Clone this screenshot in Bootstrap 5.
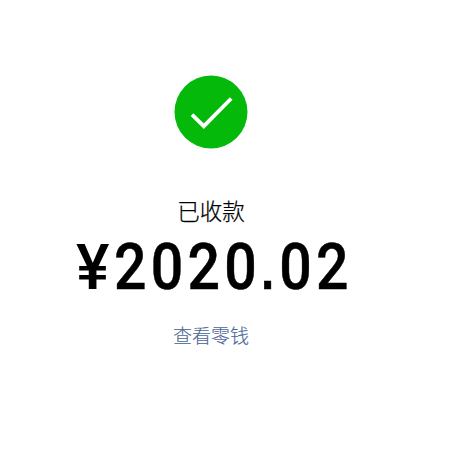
<!DOCTYPE html>
<html lang="zh-CN">
<head>
<meta charset="utf-8">
<meta name="viewport" content="width=device-width, initial-scale=1">
<title>已收款</title>
<link href="https://cdn.jsdelivr.net/npm/bootstrap@5.3.0/dist/css/bootstrap.min.css" rel="stylesheet">
<style>
body { font-family: "Noto Sans CJK SC", sans-serif; color: #000; }
.receipt { width: 422px; padding-top: 75px; }
.status-icon { width: 74px; height: 74px; }
.status-text { margin-top: 44px; font-size: 22.5px; line-height: 34px; font-weight: 300; -webkit-text-stroke: .25px; }
.amount { width: 270px; height: 70px; margin-top: 5px; font-family: Roboto, sans-serif; font-weight: 500; font-size: 65px; line-height: 70px; }
.currency { width: 37.5px; font-size: 63px; line-height: 71px; }
.digits { letter-spacing: 4.8px; transform: scaleX(.88); transform-origin: 0 50%; -webkit-text-stroke: .5px; }
.decimal { font-family: "Liberation Sans", sans-serif; font-weight: 700; font-size: 54px; line-height: 1; letter-spacing: 5.7px; }
.wallet-link { margin-top: 19px; font-size: 19px; line-height: 28px; font-weight: 300; color: #4b6796; -webkit-text-stroke: .15px; }
</style>
</head>
<body class="bg-white overflow-hidden">
<main class="receipt d-flex flex-column align-items-center text-center">
  <svg class="status-icon d-block" viewBox="0 0 74 74" aria-hidden="true">
    <circle cx="37" cy="37" r="36.5" fill="#05b90a"/>
    <path d="M18 39.7 L29.8 51.2 L57.2 23.5" fill="none" stroke="#fff" stroke-width="3.8"/>
  </svg>
  <div class="status-text">已收款</div>
  <div class="amount d-flex text-start text-nowrap"><span class="currency flex-shrink-0">¥</span><span class="digits flex-shrink-0">2020<span class="decimal">.</span>02</span></div>
  <a class="wallet-link text-decoration-none" href="#">查看零钱</a>
</main>
<script src="https://cdn.jsdelivr.net/npm/bootstrap@5.3.0/dist/js/bootstrap.bundle.min.js"></script>
</body>
</html>
